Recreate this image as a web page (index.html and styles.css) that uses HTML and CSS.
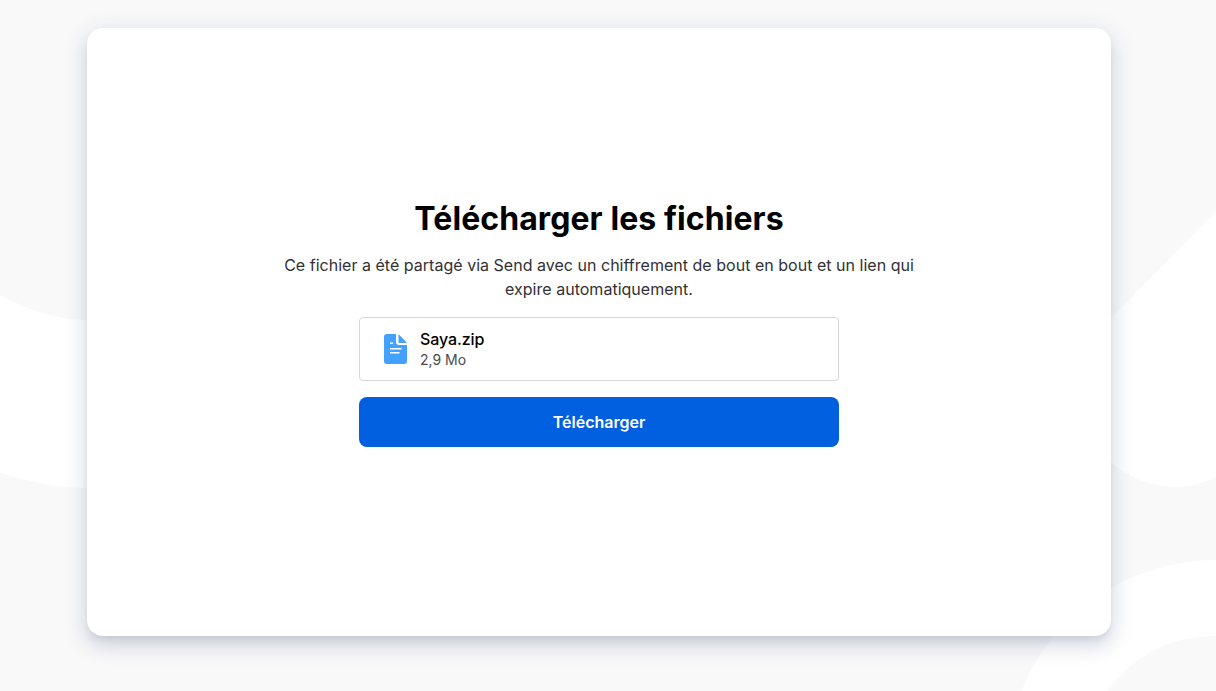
FILE: index.html
```html
<!DOCTYPE html>
<html lang="fr">
  <head>
    <title>Send</title>
    <link rel="stylesheet" href="styles.css">
  </head>
  <body>
    <svg class="backdrop" viewBox="0 0 1216 691" aria-hidden="true">
      <path d="M0 295C28 310 58 320 87 320L1109 320L1216 212L1216 477C1204 483 1191 487 1176 487C1155 487 1130 479 1111 462L600 470L87 488C58 488 30 482 0 473Z" fill="#fff" />
      <path d="M1022 691C1045 625 1120 560 1216 560L1216 636C1170 636 1135 655 1107 691Z" fill="#fff" />
    </svg>
    <main class="card">
      <h1 class="title">Télécharger les fichiers</h1>
      <p class="intro">Ce fichier a été partagé via Send avec un chiffrement de bout en bout et un lien qui expire automatiquement.</p>
      <div class="file">
        <svg class="file-icon" viewBox="0 0 23 30" aria-hidden="true">
          <path d="M2.5 0H12V8C12 9.7 13.3 11 15 11H23V27.5C23 28.9 21.9 30 20.5 30H2.5C1.1 30 0 28.9 0 27.5V2.5C0 1.1 1.1 0 2.5 0Z" fill="#45a1ff" />
          <path d="M14.5 0L23 9H15.5C14.9 9 14.5 8.6 14.5 8Z" fill="#45a1ff" />
          <path d="M6 9.3H9M6 14.7H17.5M6 18.7H15.5" stroke="#fff" stroke-width="1.4" fill="none" />
        </svg>
        <div>
          <div class="file-name">Saya.zip</div>
          <div class="file-size">2,9 Mo</div>
        </div>
      </div>
      <button class="download" type="button">Télécharger</button>
    </main>
  </body>
</html>
```

FILE: styles.css
```css
html,
body {
  height: 100%;
}
body {
  margin: 0;
  padding: 28px 105px 55px 87px;
  box-sizing: border-box;
  background-color: #f9f9fa;
  font-family: Inter, "Liberation Sans", sans-serif;
  color: #0c0c0d;
  overflow: hidden;
}
.backdrop {
  position: absolute;
  top: 0;
  left: 0;
  width: 1216px;
  height: 691px;
}
.card {
  position: relative;
  height: 100%;
  display: flex;
  flex-direction: column;
  align-items: center;
  padding-top: 171px;
  box-sizing: border-box;
  background-color: #fff;
  border-radius: 16px;
  box-shadow: 0 12px 18px 2px rgba(34, 0, 51, 0.04), 0 6px 22px 4px rgba(7, 48, 114, 0.12), 0 6px 10px -4px rgba(14, 13, 26, 0.12);
}
.title {
  margin: 0;
  font-size: 32px;
  line-height: 40px;
  font-weight: 700;
  letter-spacing: 0.08px;
  color: #000;
}
.intro {
  width: 640px;
  margin: 14px 0 0;
  font-size: 16px;
  line-height: 24px;
  letter-spacing: 0.02px;
  text-align: center;
  color: #313136;
}
.file {
  width: 480px;
  height: 64px;
  margin-top: 16px;
  padding-left: 24px;
  box-sizing: border-box;
  display: flex;
  align-items: center;
  gap: 13px;
  border: 1px solid #d7d7db;
  border-radius: 4px;
}
.file-icon {
  width: 23px;
  height: 30px;
}
.file-name {
  font-size: 16px;
  line-height: 22px;
  font-weight: 500;
  letter-spacing: -0.1px;
  color: #000;
}
.file-size {
  font-size: 14px;
  line-height: 20px;
  color: #4a4a4f;
}
.download {
  width: 480px;
  height: 50px;
  margin-top: 16px;
  border: none;
  border-radius: 8px;
  background-color: #0060df;
  color: #fff;
  font: 600 16px Inter, "Liberation Sans", sans-serif;
  cursor: pointer;
}
```
